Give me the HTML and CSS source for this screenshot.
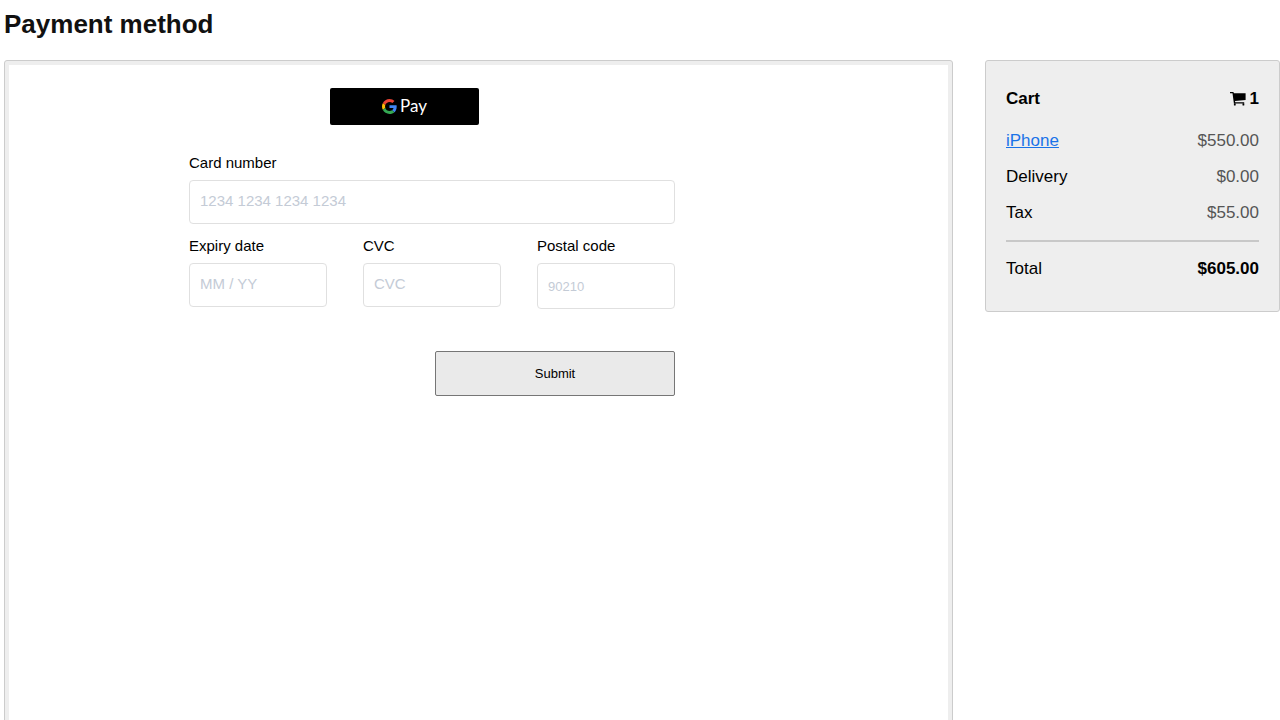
FILE: index.html
```html
<!DOCTYPE html>
<html lang="en">
<head>
  <meta charset="UTF-8" />
  <meta name="viewport" content="width=device-width, initial-scale=1.0" />
  <title>Payment method</title>
  <link rel="stylesheet" href="styles.css">
</head>
<body>
  <h1 class="page-title">Payment method</h1>
  <div class="checkout">
    <main class="panel">
      <div class="panel-body">
        <form class="payment-form">
          <button type="button" class="gpay-button" aria-label="Google Pay">
            <svg class="google-mark" viewBox="0 0 48 48" aria-hidden="true">
              <path fill="#EA4335" d="M24 9.5c3.54 0 6.71 1.22 9.21 3.6l6.85-6.85C35.9 2.38 30.47 0 24 0 14.62 0 6.51 5.38 2.56 13.22l7.98 6.19C12.43 13.72 17.74 9.5 24 9.5z"/>
              <path fill="#4285F4" d="M46.98 24.55c0-1.57-.15-3.09-.38-4.55H24v9.02h12.94c-.58 2.96-2.26 5.48-4.78 7.18l7.73 6c4.51-4.18 7.09-10.36 7.09-17.65z"/>
              <path fill="#FBBC05" d="M10.53 28.59c-.48-1.45-.76-2.99-.76-4.59s.27-3.14.76-4.59l-7.98-6.19C.92 16.46 0 20.12 0 24s.92 7.54 2.56 10.78l7.97-6.19z"/>
              <path fill="#34A853" d="M24 48c6.48 0 11.93-2.13 15.89-5.81l-7.73-6c-2.15 1.45-4.92 2.3-8.16 2.3-6.26 0-11.57-4.22-13.47-9.91l-7.98 6.19C6.51 42.62 14.62 48 24 48z"/>
            </svg>
            <span>Pay</span>
          </button>
          <div class="field field-wide">
            <label for="cardNumber">Card number</label>
            <input type="text" id="cardNumber" placeholder="1234 1234 1234 1234">
          </div>
          <div class="field">
            <label for="expiry">Expiry date</label>
            <input type="text" id="expiry" placeholder="MM / YY">
          </div>
          <div class="field">
            <label for="cvc">CVC</label>
            <input type="text" id="cvc" placeholder="CVC">
          </div>
          <div class="field">
            <label for="postal">Postal code</label>
            <input type="text" id="postal" class="postal-input" placeholder="90210">
          </div>
          <button type="submit" class="submit-button">Submit</button>
        </form>
      </div>
    </main>
    <aside class="cart">
      <h2 class="cart-row cart-title">
        <span>Cart</span>
        <span class="cart-count">
          <svg class="cart-icon" viewBox="0 0 16 14" aria-hidden="true">
            <path d="M0 0h3.400l.5 1.300H15.600V8L5 9.100l.2 1.100H14.200v1.300H3.900L2.500 1.300H0z"/>
            <rect x="3.900" y="11.200" width="1.800" height="2.300" rx=".6"/>
            <rect x="12.500" y="11.200" width="1.800" height="2.300" rx=".6"/>
          </svg>
          1
        </span>
      </h2>
      <div class="cart-row"><a href="#">iPhone</a><span class="price">$550.00</span></div>
      <div class="cart-row"><span>Delivery</span><span class="price">$0.00</span></div>
      <div class="cart-row"><span>Tax</span><span class="price">$55.00</span></div>
      <hr>
      <div class="cart-row"><span>Total</span><strong>$605.00</strong></div>
    </aside>
  </div>
</body>
</html>
```
FILE: styles.css
```css
* { box-sizing: border-box; }
body {
  margin: 0;
  padding-left: 4px;
  font-family: "Liberation Sans", Arial, sans-serif;
  font-size: 17px;
  color: #000;
  background: #fff;
}
.page-title {
  margin: 8px 0 20px;
  font-size: 26px;
  line-height: 32px;
  color: #111;
}
.checkout {
  display: grid;
  grid-template-columns: 1fr 295px;
  gap: 32px;
  align-items: start;
}
.panel {
  min-height: 100vh;
  display: flex;
  padding: 4px;
  background: #eee;
  border: 1px solid #ccc;
  border-radius: 3px;
}
.panel-body {
  flex: 1;
  padding: 23px 20px 40px 180px;
  background: #fff;
}
.payment-form {
  display: grid;
  grid-template-columns: repeat(3, 1fr);
  column-gap: 36px;
  row-gap: 12px;
  align-items: start;
  max-width: 486px;
}
.gpay-button {
  grid-column: 1 / -1;
  display: flex;
  align-items: center;
  justify-content: center;
  gap: 3px;
  width: 149px;
  height: 37px;
  margin: 0 0 16px 141px;
  padding: 0 0 1px;
  background: #000;
  border: none;
  border-radius: 2px;
  color: #fff;
  font: 17px/20px Lato, sans-serif;
  cursor: pointer;
}
.google-mark {
  width: 15px;
  height: 15px;
}
.field {
  display: flex;
  flex-direction: column;
  gap: 7px;
  font-size: 15px;
  line-height: 20px;
}
.field-wide { grid-column: 1 / -1; }
.field input {
  width: 100%;
  height: 44px;
  padding: 0 10px 3px;
  font: inherit;
  color: #333;
  background: #fff;
  border: 1px solid #e0e0e0;
  border-radius: 4px;
}
.field input::placeholder { color: #c4cbd6; }
.field .postal-input {
  height: 46px;
  padding-bottom: 0;
  font-size: 13px;
}
.submit-button {
  grid-column: 1 / -1;
  justify-self: end;
  width: 240px;
  height: 45px;
  margin-top: 30px;
  padding-bottom: 2px;
  font: 13px "Liberation Sans", Arial, sans-serif;
  color: #000;
  background: #eaeaea;
  border: 1px solid #767676;
  border-radius: 2px;
  cursor: pointer;
}
.cart {
  padding: 28px 20px 32px;
  background: #eee;
  border: 1px solid #ccc;
  border-radius: 3px;
}
.cart-row {
  display: flex;
  justify-content: space-between;
  margin-bottom: 16px;
  line-height: 20px;
}
.cart-row:last-child { margin-bottom: 0; }
.cart-row a { color: #1a73e8; }
.cart-title {
  margin: 0 0 22px;
  font-size: 17px;
}
.cart-count {
  display: flex;
  align-items: center;
  gap: 4px;
}
.cart-icon {
  width: 16px;
  height: 14px;
}
.price { color: #555; }
.cart hr {
  height: 2px;
  margin: 17px 0;
  background: #c8c8c8;
  border: none;
}
```
